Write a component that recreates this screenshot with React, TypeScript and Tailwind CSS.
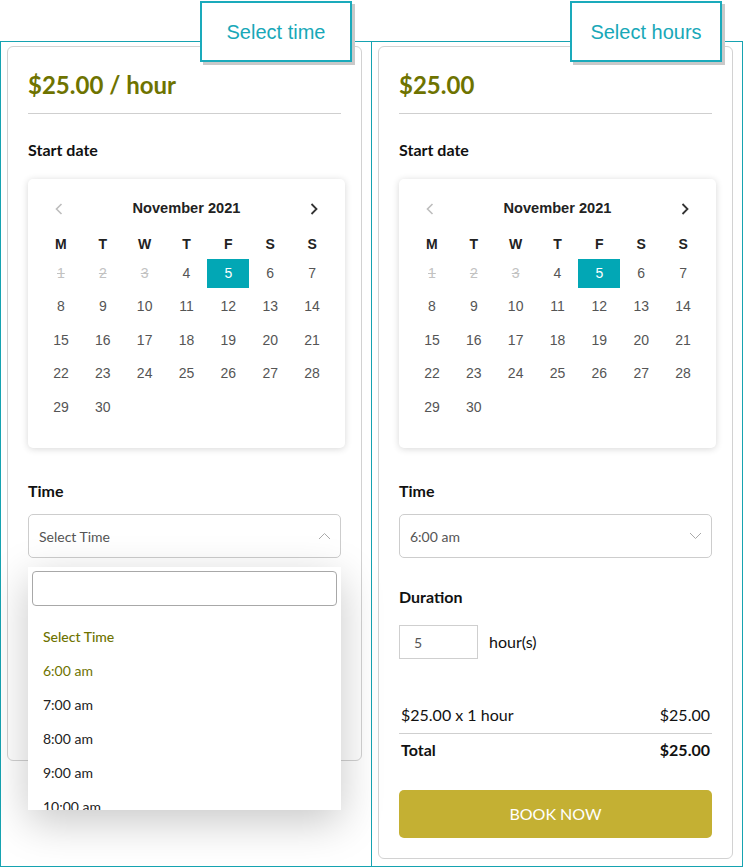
import React from "react";

const teal = "border-[#16a3b1]";

const days = Array.from({ length: 30 }, (_, i) => i + 1);
const weekdays = ["M", "T", "W", "T", "F", "S", "S"];

// Flatpickr-like inline calendar
function Calendar() {
  return (
    <div className="w-[317px] h-[269px] rounded-[5px] bg-white shadow-[0_1px_7px_rgba(0,0,0,0.16)] pt-[10px] px-[12px] font-['Liberation_Sans',Arial,sans-serif]">
      <div className="flex items-center justify-between h-[40px]">
        <div className="w-[38px] flex justify-center">
          <svg width="8" height="12" viewBox="0 0 8 12">
            <polyline points="6.5,1 1.5,6 6.5,11" fill="none" stroke="#bdbdbd" strokeWidth="1.6" />
          </svg>
        </div>
        <span className="text-[14.6px] font-bold text-[#222]">November 2021</span>
        <div className="w-[38px] flex justify-center">
          <svg width="8" height="12" viewBox="0 0 8 12">
            <polyline points="1.5,1 6.5,6 1.5,11" fill="none" stroke="#333" strokeWidth="1.8" />
          </svg>
        </div>
      </div>
      <div className="grid grid-cols-7 h-[24px] mt-[3px] items-center text-center text-[14px] font-bold text-[#222]">
        {weekdays.map((d, i) => (
          <span key={i}>{d}</span>
        ))}
      </div>
      <div className="grid grid-cols-7 gap-y-[4.4px] mt-[3px] text-[14px]">
        {days.map((d) => (
          <div
            key={d}
            className={
              d === 5
                ? "h-[29px] flex items-center justify-center bg-[#02a7b5] text-white"
                : d < 4
                  ? "h-[29px] flex items-center justify-center text-[#c2c2c2] line-through"
                  : "h-[29px] flex items-center justify-center text-[#555]"
            }
          >
            {d}
          </div>
        ))}
      </div>
    </div>
  );
}

function Chevron({ up }: { up?: boolean }) {
  return (
    <svg width="13" height="8" viewBox="0 0 13 8">
      <polyline
        points={up ? "1,7 6.5,1.5 12,7" : "1,1 6.5,6.5 12,1"}
        fill="none"
        stroke="#a9a9a9"
        strokeWidth="1"
      />
    </svg>
  );
}

function Label({ text }: { text: string }) {
  return (
    <div className="text-[16px] leading-[26px] font-bold text-[#111]">{text}</div>
  );
}

export default function App() {
  return (
    <div className="relative w-[743px] h-[867px] bg-white font-['Lato',sans-serif] text-[#111]">
      <div className="flex pt-[41px]">
        {/* Left: select time */}
        <div className={`w-[372px] h-[826px] border ${teal} pl-[6px] pt-[4px]`}>
          <div className="w-[355px] h-[715px] border border-[#d2d2d2] rounded-[6px] p-[20px]">
            <div className="text-[24px] leading-[36px] font-bold text-[#6e7300]">$25.00 / hour</div>
            <div className="h-px bg-[#cfcfcf] mt-[10px]" />
            <div className="mt-[23px] mb-[16px]">
              <Label text="Start date" />
            </div>
            <Calendar />
            <div className="mt-[30px] mb-[10px]">
              <Label text="Time" />
            </div>
            <div className="relative">
              <div className="h-[44px] border border-[#cdcdcd] rounded-[5px] pl-[10px] pr-[9px] flex items-center justify-between text-[14px] text-[#555]">
                <span>Select Time</span>
                <Chevron up />
              </div>
              <div className="absolute left-0 right-0 top-[53px] h-[243px] bg-white overflow-hidden shadow-[0_12px_40px_rgba(0,0,0,0.22)] z-10">
                <div className="m-[4px] h-[35px] border border-[#a8a8a8] rounded-[4px]" />
                <div className="mt-[13px] text-[14px]">
                  <div className="h-[34px] flex items-center pl-[15px] font-medium text-[#6e7300]">Select Time</div>
                  <div className="h-[34px] flex items-center pl-[15px] text-[#6e7300]">6:00 am</div>
                  <div className="h-[34px] flex items-center pl-[15px] text-[#222]">7:00 am</div>
                  <div className="h-[34px] flex items-center pl-[15px] text-[#222]">8:00 am</div>
                  <div className="h-[34px] flex items-center pl-[15px] text-[#222]">9:00 am</div>
                  <div className="h-[34px] flex items-center pl-[15px] text-[#222]">10:00 am</div>
                </div>
              </div>
            </div>
          </div>
        </div>

        {/* Right: select hours */}
        <div className={`w-[371px] h-[826px] border-y border-r ${teal} pl-[6px] pt-[4px]`}>
          <div className="w-[355px] border border-[#d2d2d2] rounded-[6px] p-[20px]">
            <div className="text-[24px] leading-[36px] font-bold text-[#6e7300]">$25.00</div>
            <div className="h-px bg-[#cfcfcf] mt-[10px]" />
            <div className="mt-[23px] mb-[16px]">
              <Label text="Start date" />
            </div>
            <Calendar />
            <div className="mt-[30px] mb-[10px]">
              <Label text="Time" />
            </div>
            <div className="h-[44px] border border-[#cdcdcd] rounded-[5px] pl-[10px] pr-[9px] flex items-center justify-between text-[14px] text-[#555]">
              <span>6:00 am</span>
              <Chevron />
            </div>
            <div className="mt-[26px] mb-[15px]">
              <Label text="Duration" />
            </div>
            <div className="flex items-center gap-[11px]">
              <div className="w-[79px] h-[34px] border border-[#cfcfcf] pl-[14px] flex items-center text-[14px] text-[#555]">5</div>
              <span className="text-[16px]">hour(s)</span>
            </div>
            <div className="mt-[43px] flex justify-between px-[2px] pb-[5px] border-b border-[#cfcfcf] text-[16px] leading-[26px]">
              <span>$25.00 x 1 hour</span>
              <span>$25.00</span>
            </div>
            <div className="mt-[3px] flex justify-between px-[2px] text-[16px] leading-[26px] font-bold">
              <span>Total</span>
              <span>$25.00</span>
            </div>
            <button className="mt-[27px] w-full h-[48px] rounded-[5px] bg-[#c4b033] text-white text-[16px] font-normal">
              BOOK NOW
            </button>
          </div>
        </div>
      </div>

      {/* Annotation labels */}
      <div className="absolute left-[200px] top-[1px] w-[152px] h-[61px] border-2 border-[#1aaabb] bg-white shadow-[3px_3px_0_#c9c9c9] flex items-center justify-center text-[20px] text-[#18a8b8] font-['Liberation_Sans',Arial,sans-serif]">
        Select time
      </div>
      <div className="absolute left-[570px] top-[1px] w-[152px] h-[61px] border-2 border-[#1aaabb] bg-white shadow-[3px_3px_0_#c9c9c9] flex items-center justify-center text-[20px] text-[#18a8b8] font-['Liberation_Sans',Arial,sans-serif]">
        Select hours
      </div>
    </div>
  );
}
